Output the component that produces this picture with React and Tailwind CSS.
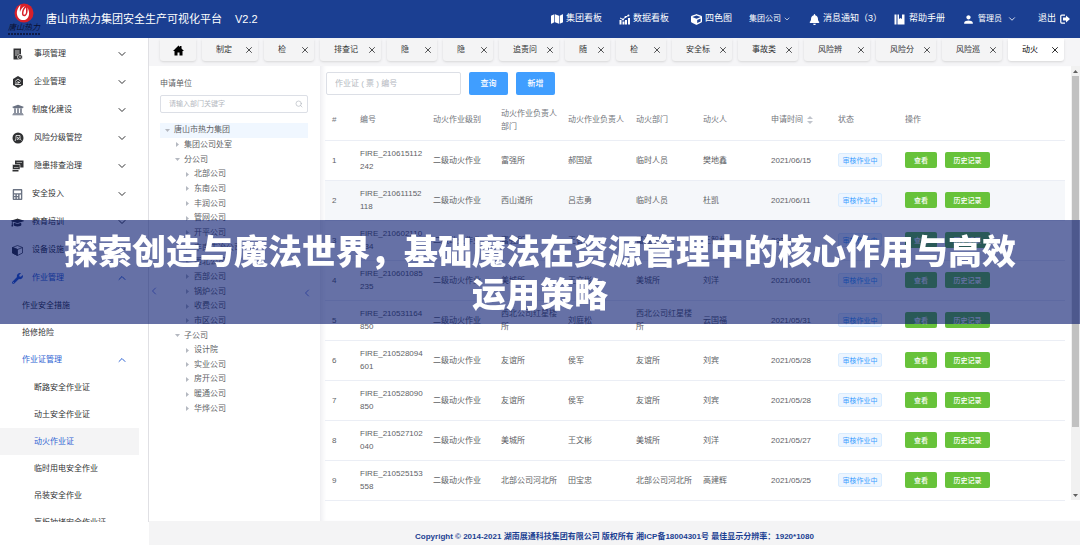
import React, { useState } from 'react';
import { FaMap, FaCube, FaBell, FaCalculator, FaGraduationCap, FaWrench, FaUniversity } from 'react-icons/fa';
import { MdPerson } from 'react-icons/md';
import { ChevronDown, ChevronUp, ChevronLeft, Search, X } from 'lucide-react';

const ChartIcon = () => (
  <svg className="w-[11px] h-[11px]" viewBox="0 0 22 22" fill="currentColor">
    <path d="M1 12h4v9H1zM7 15h4v6H7zM12 12h4v9h-4zM18 8h4v13h-4z" />
    <path d="M2 8l6 3 5-5 6-3" fill="none" stroke="currentColor" strokeWidth="2" />
    <circle cx="8" cy="11" r="2" />
    <circle cx="13" cy="6" r="2" />
    <circle cx="19" cy="3" r="2" />
  </svg>
);

const BookIcon = () => (
  <svg className="w-[11px] h-[11px]" viewBox="0 0 22 22" fill="currentColor">
    <path d="M1 1h4v20H1zM7 1h3v9l3-2 3 2V1h5v20H7z" />
  </svg>
);

const ExitIcon = () => (
  <svg className="w-[10px] h-[10px]" viewBox="0 0 20 20" fill="currentColor">
    <path d="M10 2H3.500Q1.500 2 1.500 4v12q0 2 2 2H10" fill="none" stroke="currentColor" strokeWidth="2.500" />
    <path d="M6 7h6V3l8 7-8 7v-4H6z" />
  </svg>
);

const FormIcon = () => (
  <svg className="w-[11px] h-[12px]" viewBox="0 0 22 24">
    <path d="M3 1h15v22H3z" fill="currentColor" />
    <path d="M6 6h9M6 10h9M6 14h5" stroke="#fff" strokeWidth="1.500" />
    <circle cx="16" cy="18" r="5" fill="currentColor" stroke="#fff" strokeWidth="1.500" />
    <circle cx="16" cy="18" r="1.500" fill="#fff" />
  </svg>
);

const CompanyIcon = () => (
  <svg className="w-[12px] h-[12px]" viewBox="0 0 24 24">
    <path d="M12 0l10 6v12l-10 6-10-6V6z" fill="currentColor" />
    <path d="M6 11l6-5 6 5M12 10v7M8 12v5M12 13h4M6 17h12" stroke="#fff" strokeWidth="1.500" fill="none" />
  </svg>
);

const RiskIcon = () => (
  <svg className="w-[12px] h-[12px]" viewBox="0 0 24 24">
    <circle cx="12" cy="12" r="11" fill="currentColor" />
    <path d="M6 18c2-3 2-6 2-11h8c0 5 0 8 3 10M10 10l5 6M15 10l-5 6" stroke="#fff" strokeWidth="1.500" fill="none" />
  </svg>
);

const ScreensIcon = () => (
  <svg className="w-[12px] h-[12px]" viewBox="0 0 24 24" fill="currentColor">
    <path d="M6 1h17v14H6z" />
    <path d="M1 9h15v10H1z" stroke="#fff" strokeWidth="1" />
    <path d="M1 20h12v3H1z" />
    <path d="M9 5h11M4 15h9" stroke="#fff" strokeWidth="1" />
  </svg>
);

const CubeOutlineIcon = () => (
  <svg className="w-[11px] h-[11px]" viewBox="0 0 22 22" fill="none" stroke="currentColor" strokeWidth="1.500">
    <path d="M1 5l10 4 10-4v11l-10 5-10-5z" />
    <path d="M1 5l10 4v12L1 16z" fill="currentColor" />
    <path d="M1 5l10-4 10 4" />
  </svg>
);

const Logo = () => (
  <div className="w-[34px] flex flex-col items-center">
    <svg className="w-[20px] h-[20px]" viewBox="0 0 40 40">
      <circle cx="20" cy="20" r="19" fill="#d8202a" />
      <path d="M13 4c-8 8-10 19-3 27 5 5 15 4 18-2 4-6 2-14-1-20 1 8 0 14-4 17-5 2-8-2-7-7 0-5 3-9 6-13-5 2-9 7-10 12-1-4 0-9 1-14z" fill="#fff" />
      <path d="M24 9c-4 4-6 9-5 14 3 1 5-1 5-5z" fill="#fff" />
    </svg>
    <span className="font-['Liberation_Serif','Noto_Sans_CJK_SC',serif] text-[8px] leading-[10px] italic text-[#0b1030] whitespace-nowrap">
      唐山热力
    </span>
    <svg className="w-[32px] h-[2px]" viewBox="0 0 32 2">
      <path d="M0 1h32" stroke="#0b1030" strokeWidth="1.500" strokeDasharray="2 1" />
    </svg>
  </div>
);

const menus = [
  { label: '事项管理', icon: <FormIcon /> },
  { label: '企业管理', icon: <CompanyIcon /> },
  { label: '制度化建设', icon: <FaUniversity className="w-[12px] h-[12px] text-gray-500" />, wide: true },
  { label: '风险分级管控', icon: <RiskIcon /> },
  { label: '隐患排查治理', icon: <ScreensIcon /> },
  { label: '安全投入', icon: <FaCalculator className="w-[11px] h-[11px] text-gray-500" />, wide: true },
  { label: '教育培训', icon: <FaGraduationCap className="w-[13px] h-[13px]" />, wide: true },
  { label: '设备设施', icon: <CubeOutlineIcon />, wide: true },
  { label: '作业管理', icon: <FaWrench className="w-[11px] h-[11px]" />, wide: true, open: true },
];

const permits = ['断路安全作业证', '动土安全作业证', '动火作业证', '临时用电安全作业', '吊装安全作业', '盲板抽堵安全作业证'];

const tabs = [
  { label: '制定', width: 'w-[56px]' },
  { label: '检', width: 'w-[50px]' },
  { label: '排查记', width: 'w-[61px]' },
  { label: '隐', width: 'w-[50px]' },
  { label: '隐', width: 'w-[50px]' },
  { label: '追责问', width: 'w-[60px]' },
  { label: '随', width: 'w-[45px]' },
  { label: '检', width: 'w-[50px]' },
  { label: '安全标', width: 'w-[60px]' },
  { label: '事故类', width: 'w-[60px]' },
  { label: '风险辨', width: 'w-[66px]' },
  { label: '风险分', width: 'w-[60px]' },
  { label: '风险巡', width: 'w-[60px]' },
  { label: '动火', width: 'w-[56px]', active: true },
];

const tree = [
  { label: '唐山市热力集团', level: 0, open: true },
  { label: '集团公司处室', level: 1 },
  { label: '分公司', level: 1, open: true },
  { label: '北部公司', level: 2 },
  { label: '东南公司', level: 2 },
  { label: '丰润公司', level: 2 },
  { label: '管网公司', level: 2 },
  { label: '开平公司', level: 2 },
  { label: '丰南古冶公司', level: 2 },
  { label: '西北公司', level: 2 },
  { label: '西部公司', level: 2 },
  { label: '锅炉公司', level: 2 },
  { label: '收费公司', level: 2 },
  { label: '市区公司', level: 2 },
  { label: '子公司', level: 1, open: true },
  { label: '设计院', level: 2 },
  { label: '实业公司', level: 2 },
  { label: '房开公司', level: 2 },
  { label: '暖通公司', level: 2 },
  { label: '华烨公司', level: 2 },
];

const levelPadding = ['pl-[5px]', 'pl-[15px]', 'pl-[25px]'];

const rows = [
  ['FIRE_210615112242', '富强所', '郝国斌', '临时人员', '樊地鑫', '2021/06/15'],
  ['FIRE_210611152118', '西山道所', '吕志勇', '临时人员', '杜凯', '2021/06/11'],
  ['FIRE_210602110134', '富强所', '王智', '富强所', '王智林', '2021/06/02'],
  ['FIRE_210601085235', '美城所', '王文彬', '美城所', '刘洋', '2021/06/01'],
  ['FIRE_210531164850', '西北公司红星楼所', '刘庭松', '西北公司红星楼所', '云国福', '2021/05/31'],
  ['FIRE_210528094601', '友谊所', '侯军', '友谊所', '刘宾', '2021/05/28'],
  ['FIRE_210528090850', '友谊所', '侯军', '友谊所', '刘宾', '2021/05/28'],
  ['FIRE_210527102040', '美城所', '王文彬', '美城所', '刘洋', '2021/05/27'],
  ['FIRE_210525153558', '北部公司河北所', '田宝忠', '北部公司河北所', '高建辉', '2021/05/25'],
];

const Header = () => (
  <header className="h-[38px] shrink-0 bg-[#1b3f92] text-white flex items-center pl-[7px] pr-[10px] whitespace-nowrap">
    <Logo />
    <h1 className="ml-[5px] text-[11px]">唐山市热力集团安全生产可视化平台</h1>
    <span className="ml-[13px] text-[11px]">V2.2</span>
    <nav className="ml-auto flex items-center text-[9px]">
      <a href="#group" className="flex items-center gap-[3px]"><FaMap className="w-[12px] h-[12px]" />集团看板</a>
      <a href="#data" className="ml-[17px] flex items-center gap-[3px]"><ChartIcon />数据看板</a>
      <a href="#map" className="ml-[22px] flex items-center gap-[3px]"><FaCube className="w-[11px] h-[11px]" />四色图</a>
      <button className="ml-[17px] flex items-center gap-[2px] text-[8px]">集团公司<ChevronDown className="w-[8px] h-[8px]" /></button>
      <a href="#notice" className="ml-[18px] flex items-center gap-[3px]"><FaBell className="w-[11px] h-[11px]" />消息通知（3）</a>
      <a href="#help" className="ml-[12px] flex items-center gap-[4px]"><BookIcon />帮助手册</a>
      <button className="ml-[17px] flex items-center text-[8px]">
        <MdPerson className="w-[13px] h-[13px] mr-[3px]" />管理员<ChevronDown className="w-[10px] h-[10px] ml-[5px]" />
      </button>
      <button className="ml-[21px] flex items-center gap-[4px]">退出<ExitIcon /></button>
    </nav>
  </header>
);

const Sidebar = () => (
  <aside className="w-[149px] shrink-0 bg-white pb-[23px] flex flex-col text-[8px] text-[#303133]">
    <div className="flex-1 min-h-0 overflow-hidden border-r border-[#e0e0e4] pt-[2px]">
      {menus.map((menu) => (
        <button
          key={menu.label}
          className={`w-full h-[28px] flex items-center pl-[11px] pr-[20px] ${menu.open ? 'text-[#2e63d3]' : ''}`}
        >
          <span className={`w-[13px] flex justify-center ${menu.wide ? 'mr-[8px]' : 'mr-[10px]'}`}>{menu.icon}</span>
          {menu.label}
          {menu.open ? <ChevronUp className="ml-auto w-[12px] h-[12px]" /> : <ChevronDown className="ml-auto w-[12px] h-[12px]" />}
        </button>
      ))}
      <a href="#measures" className="h-[27px] flex items-center pl-[22px]">作业安全措施</a>
      <a href="#repair" className="h-[27px] flex items-center pl-[22px]">抢修抢险</a>
      <button className="w-full h-[28px] flex items-center pl-[22px] pr-[20px] text-[#2e63d3]">
        作业证管理
        <ChevronUp className="ml-auto w-[12px] h-[12px]" />
      </button>
      {permits.map((permit) => (
        <a
          key={permit}
          href="#permit"
          className={`h-[27px] mr-[9px] flex items-center pl-[34px] ${permit === '动火作业证' ? 'bg-[#f4f4f5] text-[#2e63d3]' : ''}`}
        >
          {permit}
        </a>
      ))}
    </div>
  </aside>
);

const TabBar = () => (
  <div className="h-[28px] shrink-0 bg-[#f5f5f7] flex gap-[6px] pl-[11px] pr-[18px] pt-px pb-[5px] text-[8px] text-[#303133] overflow-hidden">
    <button className="w-[36px] shrink-0 rounded-b-[3px] bg-[#f4f4f5] shadow-sm flex items-center justify-center" aria-label="首页">
      <svg className="w-[11px] h-[11px] text-black" viewBox="0 0 22 22" fill="currentColor">
        <path d="M11 1l3 3V2h3v5l5 5h-3v9h-6v-6H9v6H3v-9H0z" />
      </svg>
    </button>
    {tabs.map((tab, index) => (
      <div
        key={index}
        className={`${tab.width} shrink-0 rounded-b-[3px] shadow-sm flex items-center justify-between pl-[14px] pr-[4px] ${tab.active ? 'bg-white text-black' : 'bg-[#f4f4f5]'}`}
      >
        <button>{tab.label}</button>
        <button aria-label="关闭"><X className="w-[10px] h-[10px]" /></button>
      </div>
    ))}
  </div>
);

const UnitTree = () => {
  const [keyword, setKeyword] = useState('');

  return (
    <section className="w-[172px] shrink-0 bg-white border-r border-[#f0f0f3] pl-[11px] pr-[12px] pt-[12px] text-[8px] text-[#606266]">
      <label htmlFor="unit" className="block leading-[12px]">申请单位</label>
      <div className="mt-[5px] h-[18px] flex items-center border border-[#dcdfe6] rounded-[2px] pl-[8px] pr-[4px]">
        <input
          id="unit"
          value={keyword}
          onChange={(e) => setKeyword(e.target.value)}
          placeholder="请输入部门关键字"
          className="flex-1 min-w-0 text-[7px] outline-none placeholder:text-[#b4b8c0]"
        />
        <Search className="w-[8px] h-[8px] text-[#b4b8c0]" />
      </div>
      <ul className="mt-[10px] h-[293px] flex flex-col">
        {tree.map((node) => (
          <li
            key={node.label}
            className={`flex-1 flex items-center gap-[4px] leading-[14px] ${levelPadding[node.level]} ${node.level === 0 ? 'bg-[#f0f7ff]' : ''}`}
          >
            <svg className="w-[5px] h-[5px] text-[#b4b8c0]" viewBox="0 0 5 5" fill="currentColor">
              <path d={node.open ? 'M0 1h5L2.500 4z' : 'M1 0l3 2.500L1 5z'} />
            </svg>
            {node.label}
          </li>
        ))}
      </ul>
    </section>
  );
};

const PermitTable = () => (
  <table className="w-full table-fixed text-left text-[8px] leading-[13px] text-[#606266]">
    <colgroup>
      <col className="w-[28px]" />
      <col className="w-[73px]" />
      <col className="w-[68px]" />
      <col className="w-[67px]" />
      <col className="w-[68px]" />
      <col className="w-[67px]" />
      <col className="w-[68px]" />
      <col className="w-[67px]" />
      <col className="w-[67px]" />
      <col />
    </colgroup>
    <thead>
      <tr className="h-[40px] border-b border-[#ebeef5] text-[#73767d]">
        {['#', '编号', '动火作业级别', '动火作业负责人部门', '动火作业负责人', '动火部门', '动火人', '申请时间', '状态', '操作'].map((title) => (
          <th key={title} className="pl-[7px] pr-[2px] font-normal">
            {title}
            {title === '申请时间' && (
              <svg className="inline ml-[4px] w-[6px] h-[8px] text-[#c0c4cc]" viewBox="0 0 6 8" fill="currentColor">
                <path d="M0 3l3-3 3 3zM0 5h6L3 8z" />
              </svg>
            )}
          </th>
        ))}
      </tr>
    </thead>
    <tbody>
      {rows.map(([code, leaderUnit, leader, unit, worker, date], index) => (
        <tr key={code} className={`h-[40px] border-b border-[#ebeef5] ${index === 1 ? 'bg-[#f5f7fa]' : ''}`}>
          <td className="pl-[7px]">{index + 1}</td>
          <td className="pl-[7px] pr-[2px] break-all">{code}</td>
          <td className="pl-[7px] pr-[2px]">二级动火作业</td>
          <td className="pl-[7px] pr-[2px]">{leaderUnit}</td>
          <td className="pl-[7px] pr-[2px]">{leader}</td>
          <td className="pl-[7px] pr-[2px]">{unit}</td>
          <td className="pl-[7px] pr-[2px]">{worker}</td>
          <td className="pl-[7px] pr-[2px]">{date}</td>
          <td className="pl-[7px]">
            <span className="flex items-center justify-center w-[44px] h-[14px] rounded-[2px] border border-[#d9ecff] bg-[#ecf5ff] text-[7px] text-[#409eff]">
              审核作业中
            </span>
          </td>
          <td className="pl-[7px]">
            <div className="flex gap-[8px] text-[7px] font-medium text-white">
              <button className="w-[32px] h-[16px] rounded-[2px] bg-[#67c23a]">查看</button>
              <button className="w-[45px] h-[16px] rounded-[2px] bg-[#67c23a]">历史记录</button>
            </div>
          </td>
        </tr>
      ))}
    </tbody>
  </table>
);

const Scrollbar = () => (
  <div className="w-[9px] shrink-0 bg-[#f1f1f1] flex flex-col items-center text-[#606060]">
    <svg className="w-[5px] h-[10px]" viewBox="0 0 5 10" fill="currentColor"><path d="M0 7l2.500-3L5 7z" /></svg>
    <div className="w-[7px] h-[351px] bg-[#c1c1c1]" />
    <svg className="w-[5px] h-[10px] mt-auto" viewBox="0 0 5 10" fill="currentColor"><path d="M0 4h5L2.500 7z" /></svg>
  </div>
);

const PermitPanel = () => {
  const [code, setCode] = useState('');

  return (
    <main className="flex-1 min-w-0 bg-white flex pb-[21px] shadow-[inset_4px_0_4px_-2px_#f0f0f3]">
      <div className="flex-1 min-w-0 pl-[4px] pr-[6px] pt-[6px]">
        <form className="flex h-[23px] mb-[5px] pl-px text-[8px]" onSubmit={(e) => e.preventDefault()}>
          <input
            value={code}
            onChange={(e) => setCode(e.target.value)}
            aria-label="作业证编号"
            placeholder="作业证 ( 票 ) 编号"
            className="w-[135px] px-[8px] border border-[#dcdfe6] rounded-[2px] outline-none placeholder:text-[#b4b8c0]"
          />
          <button className="ml-[8px] w-[39px] rounded-[2px] bg-[#409eff] text-white font-medium">查询</button>
          <button type="button" className="ml-[8px] w-[39px] rounded-[2px] bg-[#409eff] text-white font-medium">新增</button>
        </form>
        <PermitTable />
      </div>
      <Scrollbar />
    </main>
  );
};

// Translucent headline band lying over the page
const Banner = () => (
  <div className="fixed inset-x-0 top-[220px] pt-[11px] pb-[7px] px-[60px] bg-[#00126b]/60 text-center text-white text-[34px] leading-[43px] font-black">
    <ChevronLeft className="absolute left-[148px] top-[65px] w-[12px] h-[12px] text-[#33449a]" />
    <ChevronLeft className="absolute left-[301px] top-[67px] w-[12px] h-[12px] text-[#33449a]" />
    <p className="relative">探索创造与魔法世界，基础魔法在资源管理中的核心作用与高效运用策略</p>
  </div>
);

const App = () => (
  <div className="h-screen flex flex-col overflow-hidden bg-white font-['Liberation_Sans','Noto_Sans_CJK_SC',sans-serif]">
    <Header />
    <div className="flex-1 min-h-0 flex">
      <Sidebar />
      <div className="flex-1 min-w-0 flex flex-col">
        <TabBar />
        <div className="flex-1 min-h-0 flex overflow-hidden">
          <UnitTree />
          <PermitPanel />
        </div>
        <footer className="h-[24px] shrink-0 bg-[#f4f4f5] flex items-center justify-center pt-[7px] text-[8px] font-bold text-[#1b3f92]">
          Copyright © 2014-2021 湖南展通科技集团有限公司 版权所有 湘ICP备18004301号 最佳显示分辨率：1920*1080
        </footer>
      </div>
    </div>
    <Banner />
  </div>
);

export default App;
